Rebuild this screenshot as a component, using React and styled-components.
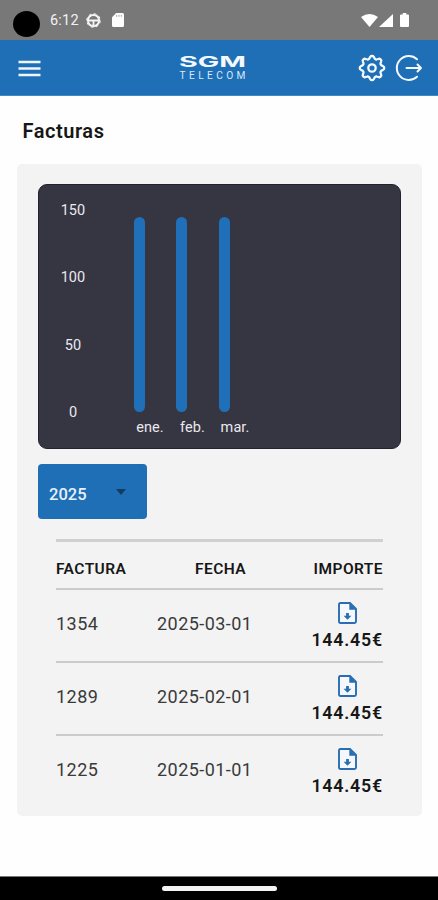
import React from "react";
import styled, { createGlobalStyle } from "styled-components";

const Global = createGlobalStyle`
  * { box-sizing: border-box; }
  body { margin: 0; background: #fff; font-family: Roboto, sans-serif; }
  svg { display: block; flex: none; }
`;

const Screen = styled.div`
  width: 438px;
  height: 900px;
  display: flex;
  flex-direction: column;
  background: #fefefe;
  overflow: hidden;
`;

const StatusBar = styled.div`
  height: 40px;
  flex: none;
  background: #787878;
  display: flex;
  align-items: center;
  padding: 11px 29px 3px 13px;
  color: #fff;
`;

const Camera = styled.div`
  width: 27px;
  height: 26px;
  margin-right: 10px;
  border-radius: 50%;
  background: #000;
`;

const Clock = styled.span`
  width: 36px;
  margin-top: -6px;
  font-size: 14.5px;
  line-height: 18px;
  letter-spacing: 0.2px;
  color: #f2f2f2;
`;

const StatusIcons = styled.div`
  display: flex;
  align-items: center;
  gap: ${(p) => p.$gap}px;
  margin-left: ${(p) => (p.$end ? "auto" : "0")};
  margin-top: -8px;
`;

const BatterySlot = styled.span`
  margin-left: 6px;
`;

const Header = styled.header`
  height: 56px;
  flex: none;
  background: #1f6fb7;
  border-bottom: 1px solid #4389c5;
  display: flex;
  align-items: center;
  padding: 1px 14px 0 18px;
`;

const IconButton = styled.button`
  padding: 0;
  border: 0;
  background: none;
  color: #fff;
  margin-left: ${(p) => p.$gap || 0}px;
`;

const Logo = styled.div`
  width: 68px;
  margin: 0 111px 0 138px;
`;

const LogoMark = styled.svg`
  overflow: visible;
`;

const Content = styled.main`
  flex: 1;
  padding: 20px 16px 0 17px;
`;

const Title = styled.h1`
  margin: 0 0 18px 5.5px;
  height: 30px;
  line-height: 31px;
  font-size: 20px;
  font-weight: 600;
  letter-spacing: 0.55px;
  color: #171717;
`;

const Card = styled.section`
  height: 652px;
  margin-top: 18px;
  padding: 20px 21px 0;
  background: #f3f3f3;
  border-radius: 5px;
`;

const Chart = styled.div`
  height: 265px;
  width: 363px;
  border-radius: 9px;
  background: #363542;
  border: 1px solid #23222f;
  display: flex;
  padding: 16px 0 0 19px;
  color: #e9e9ee;
  font-size: 14.5px;
  letter-spacing: 0.1px;
`;

const Axis = styled.div`
  width: 30px;
  height: 222px;
  display: flex;
  flex-direction: column;
  justify-content: space-between;
  align-items: center;
  line-height: 20px;
`;

const Plot = styled.div`
  display: flex;
  margin-left: 40px;
  padding-top: 16px;
`;

const Column = styled.div`
  width: 42.5px;
  display: flex;
  flex-direction: column;
  align-items: center;
`;

const Bar = styled.div`
  width: 11px;
  height: 194.5px;
  margin-right: 20px;
  border-radius: 5.5px;
  background: #1f70b8;
`;

const Month = styled.span`
  margin: 6.5px 0 0 1.5px;
  line-height: 20px;
`;

const YearSelect = styled.button`
  width: 109px;
  height: 55px;
  margin-top: 15px;
  padding: 5px 21px 0 11px;
  border: 0;
  border-radius: 4px;
  background: #1f6fb7;
  display: flex;
  align-items: center;
  justify-content: space-between;
  font: 500 16.5px Roboto, sans-serif;
  color: #e8f1fa;
`;

const Arrow = styled.svg`
  margin-top: -4px;
`;

const Table = styled.div`
  width: 327px;
  margin: 20px 0 0 18px;
  border-top: 3px solid #d0d0d0;
`;

const HeadRow = styled.div`
  height: 48px;
  display: grid;
  grid-template-columns: 101px 1fr auto;
  align-items: center;
  padding-top: 7px;
  border-bottom: 2px solid #cbcbcb;
  font-size: 15.5px;
  font-weight: 600;
  letter-spacing: 0.45px;
  color: #171717;
`;

const HeadCell = styled.span`
  padding-left: ${(p) => p.$inset || 0}px;
`;

const Row = styled.div`
  height: ${(p) => (p.$last ? 70 : 73)}px;
  display: grid;
  grid-template-columns: 101px 1fr auto;
  border-bottom: ${(p) => (p.$last ? "0" : "2px solid #cbcbcb")};
`;

const Cell = styled.span`
  padding-top: 21px;
  line-height: 25px;
  font-size: 18px;
  letter-spacing: 0.45px;
  color: #3a3a3a;
`;

const AmountCell = styled.div`
  display: flex;
  flex-direction: column;
  align-items: center;
  padding-top: 12px;
`;

const Amount = styled.span`
  margin-top: 4px;
  line-height: 24px;
  font-size: 17.8px;
  font-weight: 600;
  letter-spacing: 0.8px;
  color: #171717;
`;

const NavBar = styled.footer`
  height: 24px;
  flex: none;
  background: #000;
  border-top: 1px solid #777;
  display: flex;
  justify-content: center;
  padding-top: 9px;
`;

const Handle = styled.div`
  width: 115px;
  height: 5px;
  border-radius: 3px;
  background: #f4f4f4;
`;

const WheelIcon = () => (
  <svg width="15" height="15" viewBox="0 0 15 15" fill="none" stroke="#f4f4f4">
    <circle cx="7.5" cy="7.5" r="5.6" strokeWidth="2" />
    <circle cx="7.5" cy="7.5" r="6.8" strokeWidth="1" strokeDasharray="2.8 2.54" />
    <path d="M2 7.5h11M7.5 8v5" strokeWidth="1.8" />
  </svg>
);

const CardIcon = () => (
  <svg width="12" height="14" viewBox="0 0 12 14">
    <path d="M4.2 0H10.5Q12 0 12 1.5V12.5Q12 14 10.5 14H1.5Q0 14 0 12.5V4.2Z" fill="#fff" />
    <path d="M4.7 1.8v2M7 1.8v2M9.3 1.8v2" stroke="#aaa" />
  </svg>
);

const WifiIcon = () => (
  <svg width="17" height="13" viewBox="0 0 17 13">
    <path d="M0 3Q8.5-3 17 3L8.5 13Z" fill="#fff" />
  </svg>
);

const SignalIcon = () => (
  <svg width="14" height="13" viewBox="0 0 14 13">
    <path d="M14 0V13H0Z" fill="#fff" />
  </svg>
);

const BatteryIcon = () => (
  <svg width="9" height="14" viewBox="0 0 9 14">
    <path d="M2.7 0h3.6v1.5H8q1 0 1 1V13q0 1-1 1H1q-1 0-1-1V2.5q0-1 1-1h1.7Z" fill="#fff" />
  </svg>
);

const MenuIcon = () => (
  <svg width="23" height="17" viewBox="0 0 23 17" stroke="#eef5fb" strokeWidth="2.4">
    <path d="M.5 2h22M.5 8.5h22M.5 15h22" />
  </svg>
);

const gearPath = (() => {
  const points = [];
  for (let i = 0; i < 64; i++) {
    const a = (i / 64) * Math.PI * 2;
    const wave = Math.cos(a * 8);
    const r = 10.8 + 1.4 * Math.sign(wave) * Math.pow(Math.abs(wave), 0.5);
    points.push(`${(14 + r * Math.cos(a)).toFixed(2)} ${(14 + r * Math.sin(a)).toFixed(2)}`);
  }
  return `M${points.join("L")}Z`;
})();

const GearIcon = () => (
  <svg width="28" height="28" viewBox="0 0 28 28" fill="none" stroke="#f2f8fd" strokeWidth="2.3" strokeLinejoin="round">
    <path d={gearPath} />
    <circle cx="14" cy="14" r="3.7" />
  </svg>
);

const LogoutIcon = () => (
  <svg width="28" height="28" viewBox="0 0 28 28" fill="none" stroke="#f2f8fd" strokeWidth="2" strokeLinecap="round" strokeLinejoin="round">
    <path d="M22 5.2A12 12 0 1 0 22 22.8" />
    <path d="M11.5 14H26M22.5 10.5 26 14l-3.5 3.5" />
  </svg>
);

const DownloadIcon = () => (
  <svg width="19" height="22" viewBox="0 0 19 22">
    <path d="M2.3 1H12l6 6v12.5q0 1.5-1.5 1.5h-14Q1 21 1 19.5V2.3Q1 1 2.3 1Z" fill="#f4f8fc" stroke="#2a6db0" strokeWidth="1.9" />
    <path d="M11.3 1v6.7H18Z" fill="#2a6db0" />
    <path d="M8.1 11h2.8V13.8h2.5l-3.9 4-3.9-4h2.5Z" fill="#2a6db0" />
  </svg>
);

const BrandLogo = () => (
  <Logo>
    <LogoMark width="68" height="13" viewBox="0 0 68 13" fill="#f3f9ff">
      <text x="0" y="12" fontFamily="Inter, sans-serif" fontWeight="700" fontSize="14.5" textLength="67" lengthAdjust="spacingAndGlyphs">SGM</text>
    </LogoMark>
    <LogoMark width="68" height="13" viewBox="0 0 68 13" fill="#d7e8f7">
      <text x="0.5" y="11" fontFamily="Roboto, sans-serif" fontSize="10.2" textLength="66">TELECOM</text>
    </LogoMark>
  </Logo>
);

const months = ["ene.", "feb.", "mar."];

const invoices = [
  { id: "1354", date: "2025-03-01", amount: "144.45€" },
  { id: "1289", date: "2025-02-01", amount: "144.45€" },
  { id: "1225", date: "2025-01-01", amount: "144.45€" },
];

export default function App() {
  return (
    <Screen>
      <Global />
      <StatusBar>
        <Camera />
        <Clock>6:12</Clock>
        <StatusIcons $gap={11}>
          <WheelIcon />
          <CardIcon />
        </StatusIcons>
        <StatusIcons $end $gap={1}>
          <WifiIcon />
          <SignalIcon />
          <BatterySlot><BatteryIcon /></BatterySlot>
        </StatusIcons>
      </StatusBar>
      <Header>
        <IconButton aria-label="Menú"><MenuIcon /></IconButton>
        <BrandLogo />
        <IconButton aria-label="Ajustes"><GearIcon /></IconButton>
        <IconButton aria-label="Salir" $gap={9}><LogoutIcon /></IconButton>
      </Header>
      <Content>
        <Title>Facturas</Title>
        <Card>
          <Chart>
            <Axis>
              <span>150</span>
              <span>100</span>
              <span>50</span>
              <span>0</span>
            </Axis>
            <Plot>
              {months.map((m) => (
                <Column key={m}>
                  <Bar />
                  <Month>{m}</Month>
                </Column>
              ))}
            </Plot>
          </Chart>
          <YearSelect>
            2025
            <Arrow width="10" height="6" viewBox="0 0 10 6"><path d="M0 0h10L5 6Z" fill="#143c60" /></Arrow>
          </YearSelect>
          <Table>
            <HeadRow>
              <HeadCell>FACTURA</HeadCell>
              <HeadCell $inset={38}>FECHA</HeadCell>
              <HeadCell>IMPORTE</HeadCell>
            </HeadRow>
            {invoices.map((row, i) => (
              <Row key={row.id} $last={i === invoices.length - 1}>
                <Cell>{row.id}</Cell>
                <Cell>{row.date}</Cell>
                <AmountCell>
                  <DownloadIcon />
                  <Amount>{row.amount}</Amount>
                </AmountCell>
              </Row>
            ))}
          </Table>
        </Card>
      </Content>
      <NavBar><Handle /></NavBar>
    </Screen>
  );
}
